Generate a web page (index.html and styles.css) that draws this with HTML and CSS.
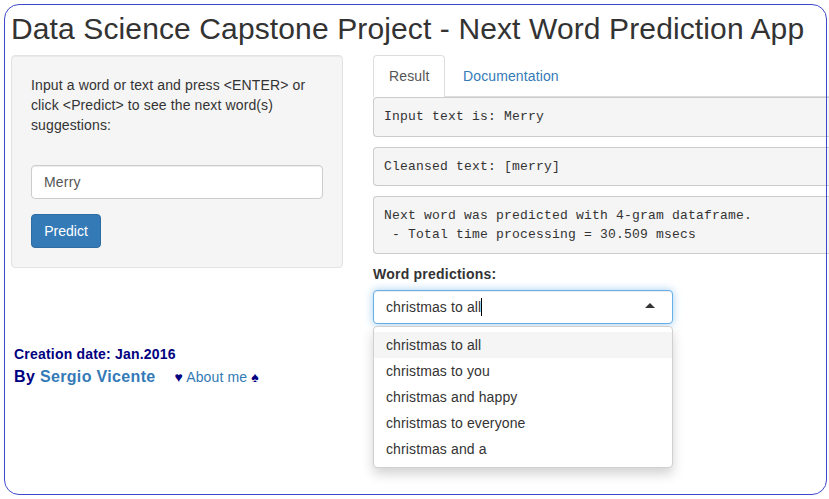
FILE: index.html
```html
<!DOCTYPE html>
<html lang="en">
<head>
<meta charset="utf-8">
<title>Next Word Prediction App</title>
<link rel="stylesheet" href="styles.css">
</head>
<body>
<div class="frame"></div>
<h2 class="title">Data Science Capstone Project - Next Word Prediction App</h2>
<div class="layout">
  <aside class="sidebar">
    <form class="well">
      <p class="hint">Input a word or text and press &lt;ENTER&gt; or<br>click &lt;Predict&gt; to see the next word(s)<br>suggestions:</p>
      <input class="field" type="text" value="Merry">
      <button class="btn" type="button">Predict</button>
    </form>
    <div class="credits">
      <div class="date">Creation date: Jan.2016</div>
      <div class="author"><span class="by">By <a href="#">Sergio Vicente</a></span><span class="about"><span class="suit">♥</span> <a href="#">About me</a> <span class="suit">♠</span></span></div>
    </div>
  </aside>
  <main class="content">
    <ul class="tabs">
      <li><a class="tab active" href="#">Result</a></li>
      <li><a class="tab" href="#">Documentation</a></li>
    </ul>
    <pre>Input text is: Merry</pre>
    <pre class="cleansed">Cleansed text: [merry]</pre>
    <pre class="status">Next word was predicted with 4-gram dataframe.
 - Total time processing = 30.509 msecs</pre>
    <div class="label">Word predictions:</div>
    <div class="select">
      <div class="select-input"><span>christmas to all</span><i class="cursor"></i><i class="caret"></i></div>
      <div class="dropdown">
        <div class="option highlighted">christmas to all</div>
        <div class="option">christmas to you</div>
        <div class="option">christmas and happy</div>
        <div class="option">christmas to everyone</div>
        <div class="option">christmas and a</div>
      </div>
    </div>
  </main>
</div>
</body>
</html>
```
FILE: styles.css
```css
* { box-sizing: border-box; }
html { overflow: hidden; }
body {
  margin: 0;
  height: 499px;
  overflow: hidden;
  position: relative;
  background: #fff;
  color: #333;
  font: 14px/20px "Liberation Sans", Arial, sans-serif;
  letter-spacing: .12px;
}
a { color: #337ab7; text-decoration: none; }
.frame {
  position: absolute;
  inset: 4px 2px 4px 4px;
  border: 1px solid #3f48cc;
  border-radius: 15px;
  pointer-events: none;
  z-index: 5;
}
.title {
  margin: 0;
  padding: 12px 0 10px 11px;
  font-size: 30px;
  line-height: 33px;
  font-weight: 500;
  white-space: nowrap;
}
.layout { display: flex; gap: 30px; padding-left: 11px; }
.sidebar { width: 332px; flex: none; }
.well {
  height: 213px;
  padding: 19px;
  background: #f5f5f5;
  border: 1px solid #e3e3e3;
  border-radius: 4px;
  box-shadow: inset 0 1px 1px rgba(0, 0, 0, .05);
}
.hint { margin: 0 0 30px; white-space: nowrap; }
.field {
  display: block;
  width: 292px;
  height: 34px;
  margin-bottom: 15px;
  padding: 6px 12px;
  font: inherit;
  letter-spacing: .2px;
  color: #555;
  background: #fff;
  border: 1px solid #ccc;
  border-radius: 4px;
  box-shadow: inset 0 1px 1px rgba(0, 0, 0, .075);
}
.btn {
  display: block;
  width: 70px;
  height: 34px;
  padding: 6px 12px;
  font: inherit;
  white-space: nowrap;
  color: #fff;
  background: #337ab7;
  border: 1px solid #2e6da4;
  border-radius: 4px;
}
.credits { margin: 76px 0 0 3px; color: navy; white-space: nowrap; }
.date { font-weight: bold; letter-spacing: .2px; }
.author { display: flex; align-items: baseline; gap: 19px; padding-top: 3px; }
.by { font-size: 16px; font-weight: bold; letter-spacing: .34px; }
.suit { font-size: 14px; }
.content { flex: 1; min-width: 0; }
.tabs {
  display: flex;
  margin: 0;
  padding: 0;
  height: 42px;
  list-style: none;
  border-bottom: 1px solid #ddd;
}
.tab {
  display: block;
  height: 42px;
  margin-right: 2px;
  padding: 10px 15px;
  border: 1px solid transparent;
  border-bottom: 0;
  border-radius: 4px 4px 0 0;
}
.active { width: 72px; color: #555; background: #fff; border-color: #ddd; }
pre {
  margin: 0 0 10px;
  padding: 9.5px 0 9.5px 10px;
  font: 13px/18.57px "Liberation Mono", monospace;
  letter-spacing: .2px;
  background: #f5f5f5;
  border: 1px solid #ccc;
  border-right: 0;
  border-radius: 4px 0 0 4px;
}
.cleansed { padding-top: 10.2px; padding-bottom: 8.8px; }
.status { line-height: 19px; padding-top: 8.7px; padding-bottom: 9.5px; }
.label { margin-bottom: 6px; font-weight: bold; letter-spacing: .23px; }
.select { width: 300px; position: relative; }
.select-input {
  display: flex;
  align-items: center;
  height: 34px;
  padding: 0 17px 0 12px;
  background: #fff;
  border: 1px solid #66afe9;
  border-radius: 4px;
  box-shadow: inset 0 1px 1px rgba(0, 0, 0, .075), 0 0 8px rgba(102, 175, 233, .6);
}
.cursor { width: 1px; height: 18px; background: #000; }
.caret {
  margin-left: auto;
  margin-bottom: 3px;
  border: 5px solid transparent;
  border-top: 0;
  border-bottom-color: #333;
}
.dropdown {
  position: absolute;
  top: 36px;
  left: 0;
  width: 300px;
  padding: 5px 0;
  background: #fff;
  border: 1px solid #d0d0d0;
  border-radius: 4px;
  box-shadow: 0 6px 12px rgba(0, 0, 0, .175);
}
.option { padding: 3px 12px; }
.highlighted { background: #f5f5f5; }
```
